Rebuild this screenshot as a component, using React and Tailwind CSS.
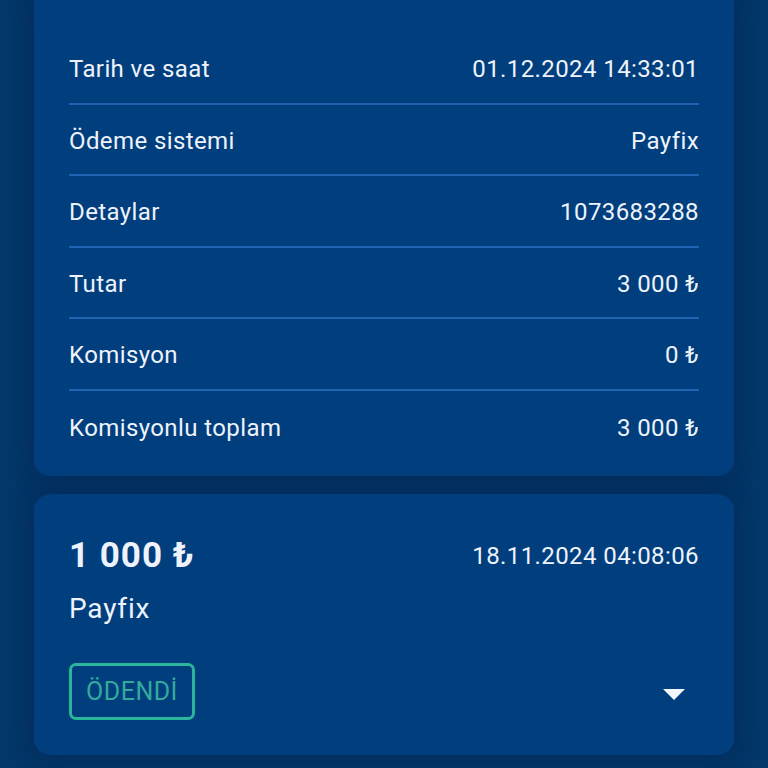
const rows = [
  ['Tarih ve saat', '01.12.2024 14:33:01'],
  ['Ödeme sistemi', 'Payfix'],
  ['Detaylar', '1073683288'],
  ['Tutar', '3 000 ₺'],
  ['Komisyon', '0 ₺'],
  ['Komisyonlu toplam', '3 000 ₺'],
];

export default function App() {
  return (
    <div
      className="min-h-[768px] bg-[#033669] px-[34px] pb-[15px] text-[#eef3fb]"
      style={{ fontFamily: 'Roboto, "Noto Sans", sans-serif' }}
    >
      <div className="rounded-b-[16px] bg-[#013e7d] px-[35px] pt-[33px] pb-[14px] shadow-[0_0_24px_rgba(0,16,48,0.35)]">
        {rows.map(([label, value], i) => (
          <div
            key={label}
            className={
              'flex h-[71.5px] items-center justify-between pt-[3px] text-[24px] leading-8 tracking-[0.4px] ' +
              (i < rows.length - 1 ? 'border-b-2 border-[#2163b3]' : '')
            }
          >
            <span>{label}</span>
            <span>{value}</span>
          </div>
        ))}
      </div>

      <div className="mt-[18px] rounded-[16px] bg-[#013e7d] px-[35px] pt-[40px] pb-[35px] shadow-[0_0_24px_rgba(0,16,48,0.35)]">
        <div className="flex items-center justify-between">
          <span className="text-[35px] font-bold leading-[44px] tracking-[1px]">1 000 ₺</span>
          <span className="text-[24px] leading-8 tracking-[0.4px]">18.11.2024 04:08:06</span>
        </div>
        <div className="mt-[13px] text-[28px] leading-9 tracking-[0.8px]">Payfix</div>
        <div className="mt-[36px] flex items-center justify-between">
          <div className="flex h-[57px] w-[126px] items-center justify-center rounded-[7px] border-[3px] border-[#2ab59c] text-[25px] tracking-[0.5px] text-[#33aa9c]">
            ÖDENDİ
          </div>
          <svg width="22" height="12" viewBox="0 0 22 12" className="mr-[14px] mt-[6px]">
            <path d="M0 0 H22 L11 11 Z" fill="#f4f6fb" />
          </svg>
        </div>
      </div>
    </div>
  );
}
